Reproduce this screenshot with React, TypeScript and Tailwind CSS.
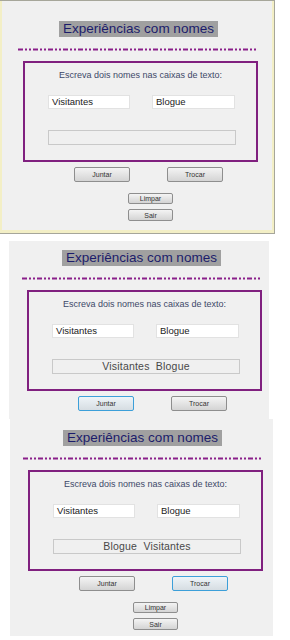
import React from 'react';

type FormProps = {
  left: number; // group box left offset inside the window
  titleTop: number;
  titleLeft: number;
  result: string;
  focused?: 'juntar' | 'trocar';
  showExtra: boolean;
};

const DashLine = () => (
  <svg width="239" height="3" className="block">
    <line x1="0" y1="1.5" x2="239" y2="1.5" stroke="#8a1f8a" strokeWidth="2" strokeDasharray="5 2 2 2 2 2" />
  </svg>
);

const WinButton = ({ label, focused, className }: { label: string; focused?: boolean; className: string }) => (
  <div
    className={`flex items-center justify-center rounded-[2px] border text-[7px] leading-none text-[#333] bg-gradient-to-b ${
      focused ? 'border-[#3c9fd9] from-[#eef4f8] to-[#d6dde2]' : 'border-[#8e8e8e] from-[#f4f4f4] to-[#d4d4d4]'
    } ${className}`}
  >
    {label}
  </div>
);

const NamesForm = ({ left, titleTop, titleLeft, result, focused, showExtra }: FormProps) => (
  <div className="flex flex-col" style={{ fontFamily: '"Liberation Sans", Arial, sans-serif' }}>
    <div
      className="h-[16px] w-[159px] bg-[#a0a0a0] text-[13.5px] leading-[16px] text-[#1c1c6b] text-center"
      style={{ marginTop: titleTop, marginLeft: titleLeft }}
    >
      Experiências com nomes
    </div>
    <div className="mt-[11px]" style={{ marginLeft: left - 5 }}>
      <DashLine />
    </div>
    <div className="mt-[10px] h-[101px] w-[235px] border-2 border-[#80207f] flex flex-col" style={{ marginLeft: left }}>
      <div className="mt-[6px] h-[12px] text-center text-[9px] leading-[12px] text-[#3d4868]">
        Escreva dois nomes nas caixas de texto:
      </div>
      <div className="mt-[14px] flex pl-[23px]">
        <div className="h-[14px] w-[82px] border border-[#e2e2e2] bg-white pl-[3px] text-[9.5px] leading-[12px] text-[#222]">
          Visitantes
        </div>
        <div className="ml-[22px] h-[14px] w-[83px] border border-[#e2e2e2] bg-white pl-[3px] text-[9.5px] leading-[12px] text-[#222]">
          Blogue
        </div>
      </div>
      <div className="ml-[23px] mt-[21px] h-[15px] w-[188px] border border-[#c9c9c9] bg-[#f0f0f0] text-center text-[10.5px] leading-[13px] text-[#484848] whitespace-pre tracking-[0.2px]">
        {result}
      </div>
    </div>
    <div className="mt-[5px] flex" style={{ marginLeft: left + 51 }}>
      <WinButton label="Juntar" focused={focused === 'juntar'} className="h-[15px] w-[56px]" />
      <WinButton label="Trocar" focused={focused === 'trocar'} className="ml-[37px] h-[15px] w-[56px]" />
    </div>
    {showExtra && (
      <div className="flex flex-col" style={{ marginLeft: left + 105 }}>
        <WinButton label="Limpar" className="mt-[11px] h-[11px] w-[45px]" />
        <WinButton label="Sair" className="mt-[5px] h-[12px] w-[45px]" />
      </div>
    )}
  </div>
);

export default function App() {
  return (
    <div className="h-[640px] w-[290px] overflow-hidden bg-white">
      {/* first capture, with the window frame */}
      <div className="h-[234px] w-[275px] border-y border-r border-[#a6a69a]">
        <div className="h-full border-l-2 border-r-2 border-b-[3px] border-[#f3efc6] bg-[#f0f0f0] overflow-hidden">
          <NamesForm left={21} titleTop={20} titleLeft={57} result="" showExtra />
        </div>
      </div>
      {/* second capture: after Juntar */}
      <div className="ml-[9px] mt-[7px] h-[178px] w-[260px] overflow-hidden bg-[#f0f0f0]">
        <NamesForm left={18} titleTop={9} titleLeft={53} result="Visitantes  Blogue" focused="juntar" showExtra={false} />
      </div>
      {/* third capture: after Trocar */}
      <div className="ml-[10px] h-[217px] w-[263px] overflow-hidden bg-[#f0f0f0]">
        <NamesForm left={18} titleTop={11} titleLeft={53} result="Blogue  Visitantes" focused="trocar" showExtra />
      </div>
    </div>
  );
}
